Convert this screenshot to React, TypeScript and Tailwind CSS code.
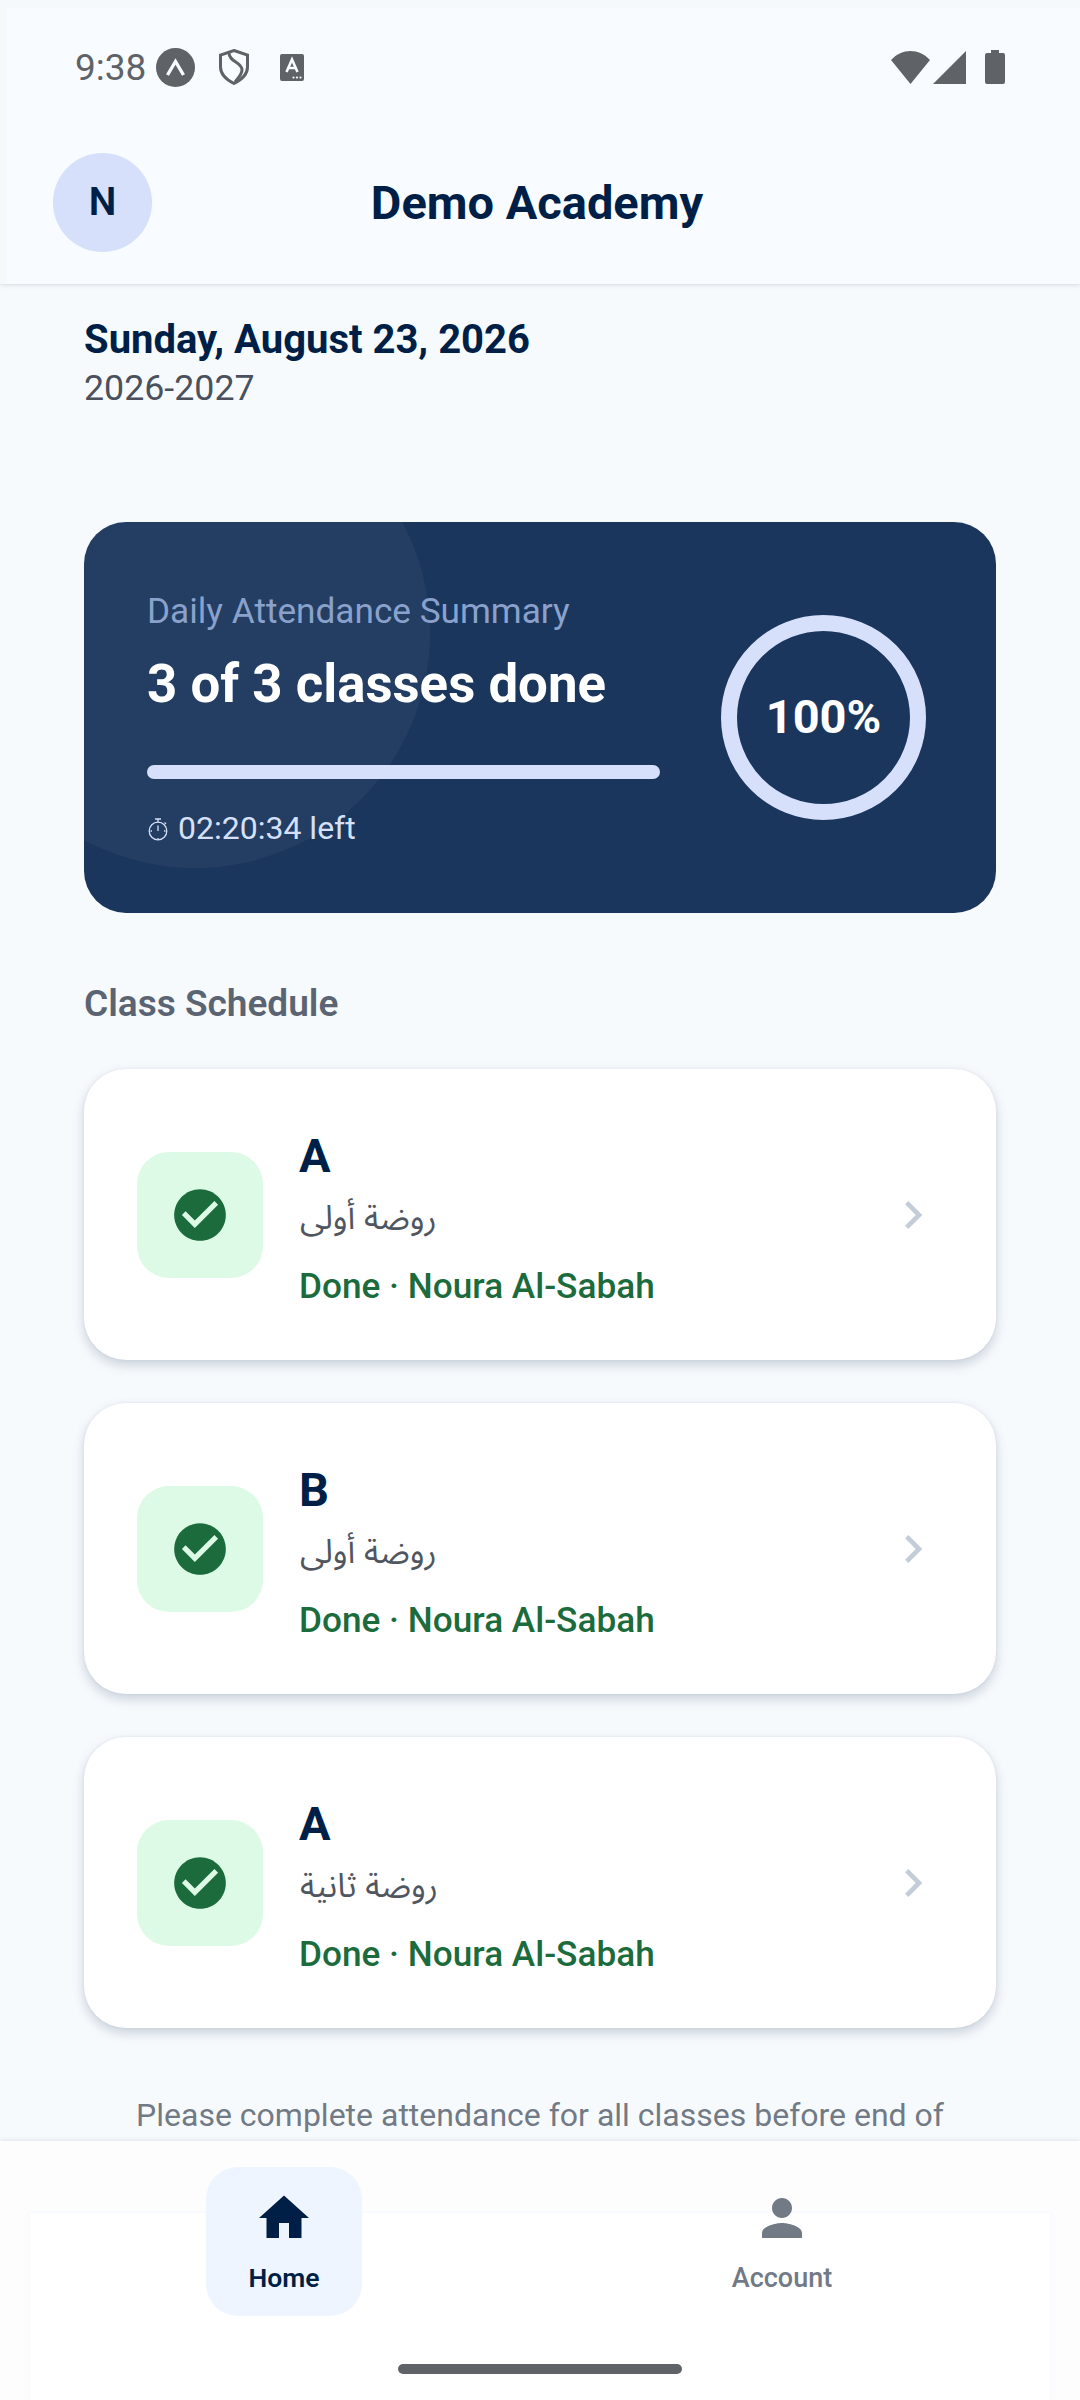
import React from "react";

function Check() {
  return (
    <svg width="62" height="62" viewBox="0 0 24 24">
      <path fill="#1b6b3c" d="M12 2C6.48 2 2 6.48 2 12s4.48 10 10 10 10-4.48 10-10S17.52 2 12 2z" />
      <path fill="#dcfae6" d="M10 17l-5-5 1.41-1.41L10 14.17l7.59-7.59L19 8l-9 9z" />
    </svg>
  );
}

function ClassCard({ name, grade }: { name: string; grade: string }) {
  return (
    <div className="flex h-[291px] items-center rounded-[42px] bg-white pl-[53px] pr-[55px] shadow-[0_5px_12px_rgba(60,80,110,0.24),0_0_3px_rgba(60,80,110,0.08)]">
      <div className="flex h-[126px] w-[126px] shrink-0 items-center justify-center rounded-[32px] bg-[#dcfae6]">
        <Check />
      </div>
      <div className="ml-[36px] flex flex-1 flex-col pt-[9px]">
        <div className="text-[47px] leading-[56px] font-bold text-[#001f47]">{name}</div>
        <div dir="rtl" className="mt-[7px] ml-[1px] self-start text-[33px] leading-[56px] text-[#50565f]" style={{ fontFamily: "'Noto Sans Arabic','Noto Naskh Arabic','DejaVu Sans',sans-serif" }}>{grade}</div>
        <div className="mt-[14px] text-[35.2px] leading-[50px] font-medium text-[#1b6b3c]">Done · Noura Al-Sabah</div>
      </div>
      <svg width="56" height="56" viewBox="0 0 24 24" className="shrink-0">
        <path fill="#c4cdd7" d="M10 6 8.59 7.41 13.17 12l-4.58 4.59L10 18l6-6z" />
      </svg>
    </div>
  );
}

export default function App() {
  return (
    <div className="flex h-[2400px] w-[1080px] flex-col overflow-hidden bg-[#f7fafd] font-['Roboto',sans-serif]">
      <header className="relative z-10 h-[284px] shrink-0 bg-[#f8fbff] shadow-[0_1px_4px_rgba(60,70,90,0.18),inset_7px_8px_0_#f6f9fc]">
        <div className="flex h-[134px] items-center justify-between pl-[75px] pr-[75px]">
          <div className="flex items-center text-[#5f6368]">
            <span className="text-[37px] leading-none">9:38</span>
            <svg width="39" height="39" viewBox="0 0 39 39" className="ml-[10px]">
              <circle cx="19.5" cy="19.5" r="19.5" fill="#5f6368" />
              <path d="M11.5 27 L19.5 13.5 L27.5 27" fill="none" stroke="#f8fbff" strokeWidth="3.4" />
            </svg>
            <svg width="30" height="36" viewBox="0 0 30 36" className="ml-[24px]">
              <path d="M15 1.5 L28.5 6 V18 C28.5 26 22 31 15 34.5 C8 31 1.5 26 1.5 18 V6 Z" fill="none" stroke="#5f6368" strokeWidth="3" />
              <path d="M10 4 C10 13 23 13 23 21 C23 25 20 28 16 33" fill="none" stroke="#5f6368" strokeWidth="3" />
            </svg>
            <svg width="24" height="27" viewBox="0 0 24 27" className="ml-[31px]">
              <rect x="0" y="0" width="24" height="27" rx="2" fill="#5f6368" />
              <path d="M6.5 18 L12 5.5 L17.5 18 M8.5 14 H15.5" fill="none" stroke="#f8fbff" strokeWidth="2.6" />
              <circle cx="13.5" cy="23.5" r="1.1" fill="#f8fbff" />
              <circle cx="17" cy="23.5" r="1.1" fill="#f8fbff" />
              <circle cx="20.5" cy="23.5" r="1.1" fill="#f8fbff" />
            </svg>
          </div>
          <div className="flex items-center">
            <svg width="39" height="33" viewBox="0 0 39 33">
              <path d="M0 9 C11 -3 28 -3 39 9 L19.5 33 Z" fill="#5f6368" />
            </svg>
            <svg width="33" height="33" viewBox="0 0 33 33" className="ml-[3px]">
              <path d="M33 0 V33 H0 Z" fill="#5f6368" />
            </svg>
            <svg width="20" height="34" viewBox="0 0 20 34" className="ml-[19px]">
              <path d="M6 0 H14 V3 H18 Q20 3 20 5 V32 Q20 34 18 34 H2 Q0 34 0 32 V5 Q0 3 2 3 H6 Z" fill="#5f6368" />
            </svg>
          </div>
        </div>
        <div className="relative mt-[19px] flex h-[99px] items-center justify-center pr-[6px] pt-[1px]">
          <div className="absolute left-[53px] top-0 flex h-[99px] w-[99px] items-center justify-center rounded-full bg-[#d6e0fa] text-[39px] font-semibold text-[#001f47]">N</div>
          <div className="text-[47px] font-bold text-[#001f47]">Demo Academy</div>
        </div>
      </header>

      <main className="min-h-0 flex-1 overflow-hidden px-[84px]">
        <div className="pt-[31px]">
          <div className="text-[40px] leading-[50px] font-bold text-[#001f47]">Sunday, August 23, 2026</div>
          <div className="mt-[3px] text-[35.75px] leading-[40px] text-[#4a515c]">2026-2027</div>
        </div>

        <section className="relative mt-[114px] flex h-[391px] items-center overflow-hidden rounded-[42px] bg-[#1b365d] pl-[63px] pr-[70px]">
          <div className="absolute left-[-124px] top-[-124px] h-[470px] w-[470px] rounded-full bg-white/[0.04]" />
          <div className="relative flex-1 pt-[2px]">
            <div className="text-[35.2px] leading-[44px] text-[#8aa2cb]">Daily Attendance Summary</div>
            <div className="mt-[20px] text-[52.8px] leading-[62px] font-bold text-white">3 of 3 classes done</div>
            <div className="mt-[50px] h-[14px] w-[513px] rounded-full bg-[#d6e0fa]" />
            <div className="mt-[29px] flex items-center text-[32px] leading-[40px] text-[#d6e0fa]">
              <svg width="20" height="23" viewBox="0 0 20 23" className="ml-[1px] mr-[10px] mt-[2px]" fill="none" stroke="#d6e0fa" strokeWidth="1.3">
                <circle cx="10" cy="13" r="8.8" />
                <path d="M7 1 H13 M10 1 V4 M10 7.5 V13 M16.5 4.5 L18 6 M10 20 V21.5 M2.5 13 H4 M16 13 H17.5" />
              </svg>
              02:20:34 left
            </div>
          </div>
          <div className="relative flex h-[205px] w-[205px] shrink-0 items-center justify-center rounded-full border-[16px] border-[#d6e0fa] text-[47px] font-bold text-white">100%</div>
        </section>

        <h2 className="mt-[66px] text-[37px] leading-[50px] font-semibold text-[#5b6472]">Class Schedule</h2>

        <div className="mt-[40px] flex flex-col gap-[43px]">
          <ClassCard name="A" grade="روضة أولى" />
          <ClassCard name="B" grade="روضة أولى" />
          <ClassCard name="A" grade="روضة ثانية" />
        </div>

        <p className="mt-[65px] px-[40px] text-center text-[32px] leading-[44px] text-[#727a86]">Please complete attendance for all classes before end of day</p>
      </main>

      <nav className="relative h-[259px] shrink-0 bg-[#fdfdfe] shadow-[0_-1px_4px_rgba(60,70,90,0.12)]">
        <div className="absolute inset-x-[30px] bottom-0 top-[72px] bg-white shadow-[0_0_5px_rgba(225,235,248,0.35)]" />
        <div className="relative flex pt-[26px]">
          <div className="ml-[206px] flex h-[149px] w-[156px] flex-col items-center rounded-[32px] bg-[#eff5ff] pt-[21px]">
            <svg width="60" height="60" viewBox="0 0 24 24"><path fill="#001f47" d="M10 20v-6h4v6h5v-8h3L12 3 2 12h3v8z" /></svg>
            <span className="mt-[13px] text-[26.5px] leading-[34px] font-semibold text-[#001f47]">Home</span>
          </div>
          <div className="ml-[342px] flex w-[156px] flex-col items-center pt-[21px]">
            <svg width="60" height="60" viewBox="0 0 24 24"><path fill="#727a86" d="M12 12c2.21 0 4-1.79 4-4s-1.79-4-4-4-4 1.79-4 4 1.79 4 4 4zm0 2c-2.67 0-8 1.34-8 4v2h16v-2c0-2.66-5.33-4-8-4z" /></svg>
            <span className="mt-[13px] text-[27px] leading-[34px] font-medium text-[#727a86]">Account</span>
          </div>
        </div>
        <div className="absolute bottom-[26px] left-[398px] h-[10px] w-[284px] rounded-full bg-[#5f6368]" />
      </nav>
    </div>
  );
}
